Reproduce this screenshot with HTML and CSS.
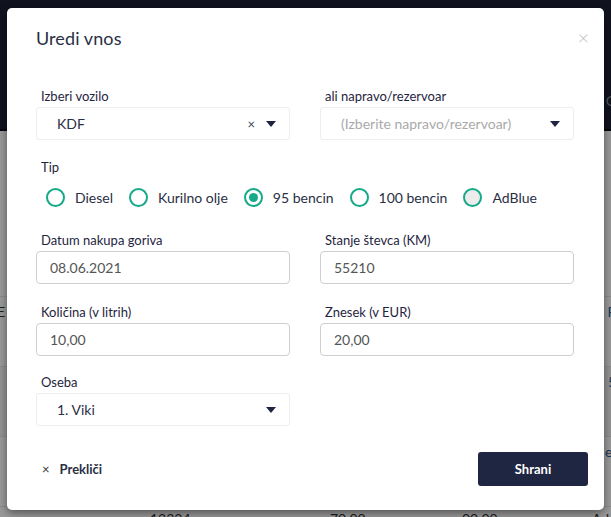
FILE: index.html
```html
<!DOCTYPE html>
<html>
<head>
<meta charset="utf-8">
<link rel="stylesheet" href="styles.css">
</head>
<body>
<div class="page">
  <div class="topbar"><span class="tb-text">C</span></div>
  <div class="content">
    <div class="row"><span class="bg-l">E</span><span class="bg-r">P</span></div>
    <div class="row alt"><span class="bg-r">5</span></div>
    <div class="row"><span class="bg-r">e:</span></div>
    <div class="row last"><span class="c1">12334</span><span class="c2">70,00</span><span class="c3">00,00</span><span class="c4">Ad</span></div>
  </div>
</div>
<div class="overlay"></div>
<div class="modal">
  <div class="modal-head">
    <h1 class="title">Uredi vnos</h1>
    <span class="close">×</span>
  </div>
  <div class="grid">
    <div class="field">
      <label class="lbl">Izberi vozilo</label>
      <div class="select">
        <span class="sel-val">KDF</span>
        <span class="sel-icons"><span class="clear">×</span><span class="caret"></span></span>
      </div>
    </div>
    <div class="field">
      <label class="lbl">ali napravo/rezervoar</label>
      <div class="select">
        <span class="sel-val placeholder">(Izberite napravo/rezervoar)</span>
        <span class="sel-icons"><span class="caret"></span></span>
      </div>
    </div>
    <div class="field full">
      <label class="lbl">Tip</label>
      <div class="radios">
        <span class="radio"><span class="dot"></span>Diesel</span>
        <span class="radio"><span class="dot"></span>Kurilno olje</span>
        <span class="radio"><span class="dot on"></span>95 bencin</span>
        <span class="radio"><span class="dot"></span>100 bencin</span>
        <span class="radio"><span class="dot dis"></span>AdBlue</span>
      </div>
    </div>
    <div class="field">
      <label class="lbl">Datum nakupa goriva</label>
      <div class="input">08.06.2021</div>
    </div>
    <div class="field">
      <label class="lbl">Stanje števca (KM)</label>
      <div class="input">55210</div>
    </div>
    <div class="field spaced">
      <label class="lbl">Količina (v litrih)</label>
      <div class="input">10,00</div>
    </div>
    <div class="field spaced">
      <label class="lbl">Znesek (v EUR)</label>
      <div class="input">20,00</div>
    </div>
    <div class="field">
      <label class="lbl">Oseba</label>
      <div class="select">
        <span class="sel-val">1. Viki</span>
        <span class="sel-icons"><span class="caret"></span></span>
      </div>
    </div>
  </div>
  <div class="footer">
    <span class="cancel"><span class="cx">×</span>Prekliči</span>
    <button class="save">Shrani</button>
  </div>
</div>
</body>
</html>
```
FILE: styles.css
```css
* { box-sizing: border-box; }
html, body { margin: 0; padding: 0; }
body {
  width: 611px;
  height: 517px;
  overflow: hidden;
  font-family: Lato, "Noto Sans", sans-serif;
  position: relative;
  background: #fff;
}
.page { width: 611px; height: 517px; display: flex; flex-direction: column; }
.topbar {
  height: 131px;
  flex: none;
  background: #1b1f33;
  border-bottom: 2px solid #0b0d15;
  position: relative;
}
.tb-text { position: absolute; right: -4px; top: 92px; color: #8a8fa0; font-size: 14px; }
.content { flex: 1; background: #fff; display: flex; flex-direction: column; padding-top: 165px; }
.row { height: 70px; flex: none; position: relative; border-top: 1px solid #e6e6e6; font-size: 14px; color: #333; }
.row.alt { background: #f4f4f4; }
.bg-l { position: absolute; left: -3px; top: 6px; }
.bg-r { position: absolute; right: -5px; top: 6px; color: #2a5a8a; }
.row.last { height: 30px; }
.c1 { position: absolute; left: 150px; top: 3px; }
.c2 { position: absolute; left: 330px; top: 3px; }
.c3 { position: absolute; left: 462px; top: 3px; }
.c4 { position: absolute; left: 592px; top: 3px; }
.overlay {
  position: absolute; inset: 0;
  background: rgba(0, 0, 0, 0.4);
}
.modal {
  position: absolute;
  left: 7px; top: 8px;
  width: 597px; height: 502px;
  background: #fff;
  border-radius: 5px;
  box-shadow: 0 3px 8px rgba(0,0,0,0.45);
  padding: 0 30px 0 29px;
  display: flex;
  flex-direction: column;
}
.modal-head {
  height: 78px;
  flex: none;
  display: flex;
  justify-content: space-between;
  align-items: flex-start;
}
.title {
  margin: 19px 0 0 0;
  font-weight: 400;
  font-size: 18px;
  color: #2a3043;
  letter-spacing: 0.1px;
}
.close {
  margin-top: 17px;
  margin-right: -15px;
  font-size: 20px;
  color: #c4c4c4;
  font-weight: 300;
}
.grid {
  display: grid;
  grid-template-columns: 254px 254px;
  column-gap: 30px;
  row-gap: 16px;
}
.field { display: flex; flex-direction: column; }
.field.spaced { margin-top: 2px; }
.field.full { grid-column: 1 / 3; margin-top: 1px; margin-bottom: 1px; }
.lbl {
  padding-left: 5px;
  font-size: 13px;
  color: #1f2540;
  height: 21px;
  line-height: 16px;
  padding-top: 2px;
}
.select {
  height: 33px;
  border: 1px solid #ededed;
  border-radius: 3px;
  display: flex;
  align-items: center;
  justify-content: space-between;
  padding: 0 13px 0 20px;
  font-size: 14px;
  color: #2a2f45;
}
.placeholder { color: #a9a9a9; }
.sel-icons { display: flex; align-items: center; gap: 11px; }
.clear { font-size: 13px; color: #3a3f55; }
.caret {
  width: 0; height: 0;
  border-left: 5px solid transparent;
  border-right: 5px solid transparent;
  border-top: 6px solid #1f2540;
}
.radios {
  display: flex;
  align-items: center;
  height: 32px;
  padding-left: 10px;
  font-size: 14px;
  color: #2a2f45;
  margin-top: 3px;
}
.radio { display: flex; align-items: center; margin-right: 16px; }
.dot {
  width: 19px; height: 19px;
  border: 2px solid #17a98a;
  border-radius: 50%;
  margin-right: 10px;
  display: inline-flex;
  align-items: center;
  justify-content: center;
}
.dot.on::after {
  content: ""; width: 9px; height: 9px; border-radius: 50%; background: #17a98a;
}
.dot.dis { background: #ececec; }
.input {
  height: 33px;
  border: 1px solid #cfcfcf;
  border-radius: 4px;
  display: flex;
  align-items: center;
  padding-left: 13px;
  font-size: 14px;
  color: #555;
}
.footer {
  margin-top: 26px;
  display: flex;
  justify-content: space-between;
  align-items: center;
}
.cancel {
  display: flex; align-items: center;
  font-size: 13px; font-weight: 700; color: #2a2f45;
  padding-left: 6px;
}
.cx { font-weight: 400; font-size: 13px; margin-right: 10px; color: #333; }
.save {
  width: 110px; height: 34px;
  margin-right: -14px;
  background: #1f2642;
  border: none;
  border-radius: 3px;
  color: #fff;
  font-family: Lato, "Noto Sans", sans-serif;
  font-weight: 700;
  font-size: 13px;
}
```
